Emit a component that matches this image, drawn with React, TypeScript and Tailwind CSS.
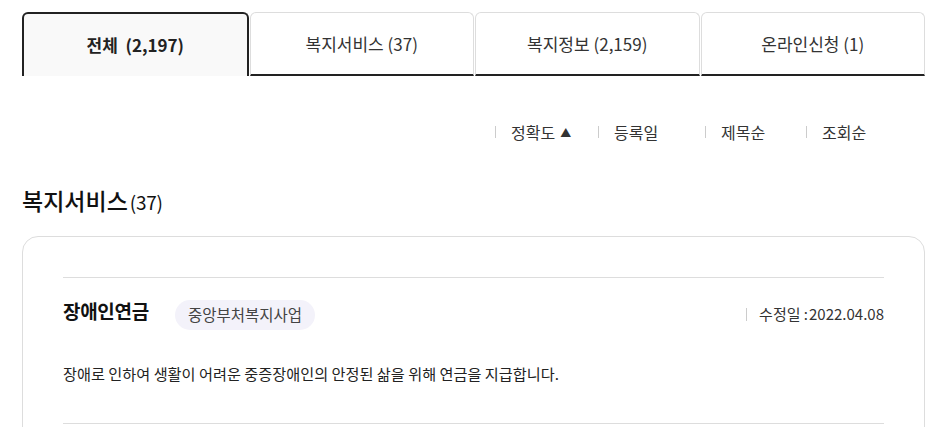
import React from "react";

const tabs = [
  { label: "전체  (2,197)", active: true },
  { label: "복지서비스 (37)", active: false },
  { label: "복지정보 (2,159)", active: false },
  { label: "온라인신청 (1)", active: false },
];

const sorts = [
  { label: "정확도", w: "w-[103px]", up: true },
  { label: "등록일", w: "w-[107px]", up: false },
  { label: "제목순", w: "w-[101px]", up: false },
  { label: "조회순", w: "w-[63px]", up: false },
];

export default function App() {
  return (
    <div
      className="w-[935px] h-[427px] overflow-hidden bg-white text-[#222]"
      style={{ fontFamily: '"Noto Sans CJK KR", "Noto Sans", sans-serif' }}
    >
      <div className="px-[22px] pt-[12px] pr-[10px]">
        {/* tabs */}
        <div className="flex gap-[1px]">
          {tabs.map((t) =>
            t.active ? (
              <div
                key={t.label}
                className="flex-1 h-[64px] flex items-center justify-center rounded-t-[6px] border-2 border-b-0 border-[#222] bg-[#f9f9f9] text-[17px] font-bold whitespace-pre"
              >
                {t.label}
              </div>
            ) : (
              <div
                key={t.label}
                className="flex-1 h-[64px] flex items-center justify-center rounded-t-[6px] border border-[#ddd] border-b-2 border-b-[#222] text-[17px] text-[#333]"
              >
                {t.label}
              </div>
            )
          )}
        </div>

        {/* sort */}
        <div className="flex justify-end mt-[44px] pr-[56px] h-[24px] items-center">
          {sorts.map((s) => (
            <div key={s.label} className={`flex items-center ${s.w}`}>
              <span className="w-px h-[12px] bg-[#ccc] mr-[15px]" />
              <span className="text-[16px] text-[#333]">{s.label}</span>
              {s.up && <span className="text-[11px] ml-[5px] text-[#333]">▲</span>}
            </div>
          ))}
        </div>

        {/* heading */}
        <h2 className="mt-[45px] flex items-baseline text-[23px] font-medium text-[#111] leading-none">
          복지서비스<span className="text-[19px] font-normal ml-[2px] tracking-[-0.3px]">(37)</span>
        </h2>

        {/* card */}
        <div className="mt-[24px] rounded-[16px] border border-[#ddd] px-[40px] pt-[40px] h-[240px]">
          <div className="border-t border-[#ddd] pt-[20px] pb-[38px]">
            <div className="flex items-center">
              <span className="text-[19px] font-bold text-[#111] tracking-[-0.3px] mt-[-6px]">장애인연금</span>
              <span className="ml-[26px] px-[13px] h-[30px] mt-[2px] rounded-full bg-[#f3f2fa] text-[15.5px] text-[#444] flex items-center">
                중앙부처복지사업
              </span>
              <div className="ml-auto flex items-center text-[15px] text-[#333]">
                <span className="w-px h-[13px] bg-[#ccc] mr-[12px]" />
                수정일&nbsp;:<span className="ml-[1px]">2022.04.08</span>
              </div>
            </div>
            <p className="mt-[32px] text-[15.2px] text-[#222]">
              장애로 인하여 생활이 어려운 중증장애인의 안정된 삶을 위해 연금을 지급합니다.
            </p>
          </div>
          <div className="border-t border-[#ddd]" />
        </div>
      </div>
    </div>
  );
}
